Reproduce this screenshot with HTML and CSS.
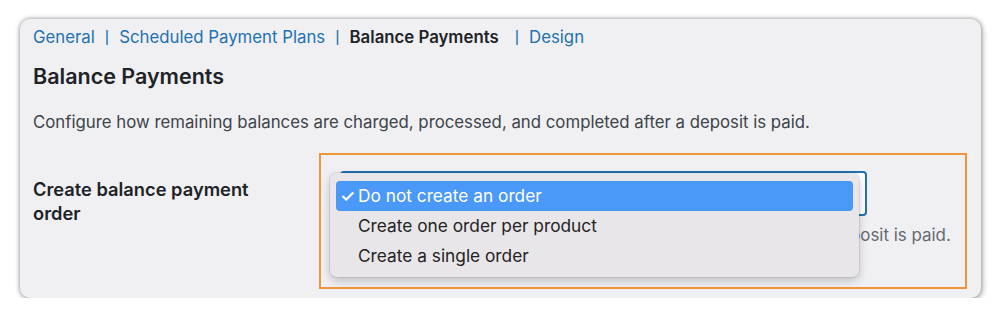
FILE: index.html
```html
<!DOCTYPE html>
<html lang="en">

<head>
    <meta charset="UTF-8">
    <title>Balance Payments</title>
    <link rel="stylesheet" href="styles.css">
</head>

<body>
    <div class="card">
        <!-- tabs -->
        <div class="tabs">
            <a href="#" class="tab">General</a>
            <span class="sep">|</span>
            <a href="#" class="tab">Scheduled Payment Plans</a>
            <span class="sep">|</span>
            <span class="tab current">Balance Payments</span>
            <span class="sep">|</span>
            <a href="#" class="tab">Design</a>
        </div>

        <h2>Balance Payments</h2>
        <p class="intro">Configure how remaining balances are charged, processed, and completed after a deposit is paid.</p>

        <div class="form-row">
            <div class="label">Create balance payment order</div>
            <div class="highlight-box">
                <div class="select-wrap">
                    <div class="select"></div>
                    <!-- opened native menu -->
                    <ul class="menu">
                        <li class="selected"><span class="check">✓</span>Do not create an order</li>
                        <li>Create one order per product</li>
                        <li>Create a single order</li>
                    </ul>
                </div>
                <p class="desc">Choose whether to create a balance payment order once the deposit is paid.</p>
            </div>
        </div>
    </div>
</body>

</html>
```

FILE: styles.css
```css
body {
    margin: 0;
    background: #fff;
    font-family: Inter, "Liberation Sans", Arial, sans-serif;
    color: #1d2327;
}

.card {
    margin: 19px 19px 0 20px;
    height: 279px;
    box-sizing: border-box;
    padding: 0 13px;
    background: #f0f0f2;
    border-radius: 10px;
    box-shadow: 0 0 5px rgba(0, 0, 0, 0.45), 2px 3px 6px rgba(0, 0, 0, 0.15);
    overflow: hidden;
}

.tabs {
    display: flex;
    align-items: center;
    height: 36px;
    font-size: 16.8px;
}

.tab {
    color: #2271b1;
    text-decoration: none;
}

.tab.current {
    color: #1d2327;
    font-weight: 600;
}

.sep {
    font-family: "Liberation Sans", Arial, sans-serif;
    color: #2271b1;
    margin: 0 10px;
}

.sep+.current {
    margin-right: 6px;
}

h2 {
    margin: 8px 0 0;
    font-size: 21.5px;
    font-weight: 600;
    line-height: 26px;
}

.intro {
    margin: 22px 0 0;
    font-size: 16.8px;
    line-height: 22px;
    color: #3c434a;
}

.form-row {
    display: flex;
    margin-top: 20px;
}

.label {
    width: 286px;
    box-sizing: border-box;
    padding: 24px 30px 0 0;
    font-size: 18.3px;
    font-weight: 600;
    line-height: 24px;
}

.highlight-box {
    width: 648px;
    height: 136px;
    box-sizing: border-box;
    border: 2px solid #f0963a;
    padding: 16px 0 0 19px;
}

.select-wrap {
    position: relative;
    width: 527px;
}

.select {
    height: 45px;
    box-sizing: border-box;
    border: 2px solid #2271b1;
    border-radius: 4px;
    background: #fff;
}

.menu {
    position: absolute;
    left: -10px;
    top: 2px;
    width: 529px;
    height: 104px;
    box-sizing: border-box;
    margin: 0;
    padding: 8px 6px;
    list-style: none;
    background: #e9e6ea;
    border-radius: 7px;
    box-shadow: 0 0 0 1px rgba(0, 0, 0, 0.08), 0 4px 10px rgba(0, 0, 0, 0.2);
    font-size: 17.3px;
    color: #222;
}

.menu li {
    position: relative;
    height: 30px;
    line-height: 30px;
    padding-left: 22px;
    border-radius: 4px;
}

.menu li.selected {
    background: #4a98f7;
    color: #fff;
}

.check {
    position: absolute;
    left: 4px;
    font-size: 17px;
    font-weight: 600;
}

.desc {
    margin: 8px 0 0;
    font-size: 16.9px;
    line-height: 22px;
    color: #646970;
    white-space: nowrap;
}
```
